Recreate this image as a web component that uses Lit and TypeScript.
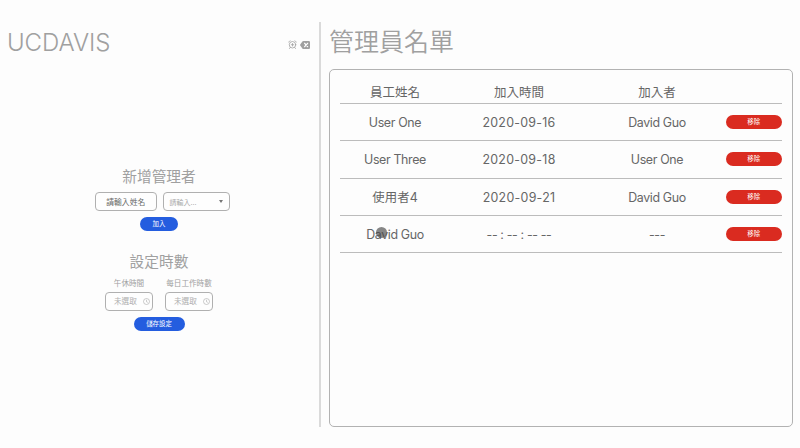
import { LitElement, html, css, svg } from "lit";
import { customElement } from "lit/decorators.js";
import { classMap } from "lit/directives/class-map.js";

interface Admin {
  name: string;
  joined: string;
  by: string;
}

const admins: Admin[] = [
  { name: "User One", joined: "2020-09-16", by: "David Guo" },
  { name: "User Three", joined: "2020-09-18", by: "User One" },
  { name: "使用者4", joined: "2020-09-21", by: "David Guo" },
  { name: "David Guo", joined: "-- : -- : -- --", by: "---" },
];

const alarmIcon = svg`<svg width="9" height="9" viewBox="0 0 18 18" fill="none" stroke="#a0a0a0" stroke-width="1.600" stroke-linecap="round">
  <circle cx="9" cy="9.500" r="6.500"/><path d="M9 7v5M6.500 9.500h5M1 4.500 4 1.500M17 4.500 14 1.500M4.500 15 3 17M13.500 15l1.500 2"/></svg>`;

const deleteIcon = svg`<svg width="10" height="8" viewBox="0 0 22 16" preserveAspectRatio="none"><path fill="#a0a0a0" d="M7.500 0H19.500Q22 0 22 2.500V13.500Q22 16 19.500 16H7.500Q6.200 16 5.200 14.800L.5 9.200Q-.3 8 .5 6.800L5.200 1.200Q6.200 0 7.500 0Z"/><path d="m10 4.500 7 7m0-7-7 7" stroke="#fff" stroke-width="2.300" stroke-linecap="round"/></svg>`;

const clockIcon = svg`<svg width="7" height="7" viewBox="0 0 14 14" fill="none" stroke="#b5b5b5" stroke-width="1.400"><circle cx="7" cy="7" r="6"/><path d="M7 3.500V7.500L9.500 8.800"/></svg>`;

@customElement("app-root")
export class AppRoot extends LitElement {
  static styles = css`
    :host {
      display: flex;
      box-sizing: border-box;
      width: 800px;
      height: 448px;
      padding: 22px 8px 21px 8px;
      background: #fdfdfd;
      color: #a0a0a0;
      font-family: Inter, "Noto Sans CJK TC", sans-serif;
      overflow: hidden;
      position: relative;
    }
    * {
      box-sizing: border-box;
    }
    svg {
      display: block;
      flex: none;
    }
    .side {
      width: 313px;
      flex: none;
      border-right: 2px solid #dadada;
      display: flex;
      flex-direction: column;
    }
    .brand {
      display: flex;
      justify-content: space-between;
      align-items: center;
      height: 40px;
      padding-right: 9px;
    }
    h1 {
      margin: 0;
      font-weight: 400;
      font-size: 24px;
      line-height: 40px;
      white-space: nowrap;
    }
    .brand h1 {
      font-weight: 350;
      letter-spacing: -0.05px;
      margin-left: -1px;
      padding-top: 1px;
    }
    .tools {
      display: flex;
      align-items: center;
      gap: 3px;
      padding-top: 5px;
    }
    .forms {
      width: 302px;
      padding-top: 104px;
      display: flex;
      flex-direction: column;
      align-items: center;
    }
    h2 {
      margin: 0;
      font-weight: 400;
      font-size: 14.700px;
      line-height: 22px;
      white-space: nowrap;
    }
    .row {
      display: flex;
      gap: 6px;
      margin-top: 4px;
      padding-left: 7px;
    }
    .field {
      height: 19px;
      border: 1px solid #b0b0b0;
      border-radius: 4px;
      display: flex;
      align-items: center;
      justify-content: space-between;
      background: #fefefe;
      white-space: nowrap;
    }
    .name {
      width: 61.500px;
      justify-content: center;
      font-size: 7.800px;
      color: #686868;
    }
    .pick {
      width: 67.500px;
      padding: 0 6px;
      font-size: 7px;
      color: #aaa;
    }
    .arrow {
      border: 2.500px solid transparent;
      border-top: 3px solid #757575;
      border-bottom: 0;
    }
    .button {
      height: 14px;
      border-radius: 7px;
      background: #245ddf;
      color: #fff;
      font-size: 6.400px;
      line-height: 14px;
      text-align: center;
      white-space: nowrap;
    }
    .join {
      width: 38px;
      margin-top: 6px;
    }
    .hours-title {
      margin-top: 20px;
    }
    .hours {
      display: flex;
      gap: 12px;
      margin-top: 5px;
    }
    .hour {
      width: 48px;
      display: flex;
      flex-direction: column;
      align-items: center;
      font-size: 7.600px;
      line-height: 12px;
      white-space: nowrap;
    }
    .hour .field {
      width: 48px;
      margin-top: 2px;
      padding: 0 2px 0 8px;
      font-size: 7.600px;
      color: #b0b0b0;
    }
    .save {
      width: 51px;
      margin-top: 6px;
    }
    .main {
      flex: 1;
      padding-left: 8px;
      display: flex;
      flex-direction: column;
    }
    .main h1 {
      font-size: 25px;
      font-weight: 350;
      padding-bottom: 7px;
    }
    .card {
      flex: 1;
      border: 1px solid #b2b2b2;
      border-radius: 5px;
      padding: 10px 10px;
      color: #666;
    }
    .line {
      display: grid;
      grid-template-columns: 110px 138px 138px 55.500px;
      align-items: center;
      justify-items: center;
      height: 37.300px;
      border-bottom: 1px solid #bcbcbc;
      font-size: 12.400px;
      letter-spacing: -0.35px;
      line-height: 18px;
      white-space: nowrap;
    }
    .line span {
      padding-top: 2px;
    }
    .line .cjk {
      letter-spacing: 0.1px;
    }
    .head {
      height: 24px;
      font-size: 12.500px;
      letter-spacing: 0;
    }
    .line .date {
      letter-spacing: 0.28px;
    }
    .line .date.empty {
      letter-spacing: -0.35px;
    }
    .remove {
      width: 55.500px;
      background: #da2b20;
      letter-spacing: 0;
    }
    .pointer {
      position: absolute;
      left: 376px;
      top: 227px;
      width: 11px;
      height: 11px;
      border-radius: 50%;
      background: rgba(70, 70, 70, 0.65);
    }
  `;

  render() {
    return html`
      <section class="side">
        <header class="brand">
          <h1>UCDAVIS</h1>
          <div class="tools">${alarmIcon}${deleteIcon}</div>
        </header>
        <div class="forms">
          <h2>新增管理者</h2>
          <div class="row">
            <div class="field name">請輸入姓名</div>
            <div class="field pick">請輸入...<i class="arrow"></i></div>
          </div>
          <div class="button join">加入</div>
          <h2 class="hours-title">設定時數</h2>
          <div class="hours">
            ${["午休時間", "每日工作時數"].map(
              (label) => html`<div class="hour">
                ${label}
                <div class="field">未選取${clockIcon}</div>
              </div>`
            )}
          </div>
          <div class="button save">儲存設定</div>
        </div>
      </section>
      <section class="main">
        <h1>管理員名單</h1>
        <div class="card">
          <div class="line head">
            <span>員工姓名</span><span>加入時間</span><span>加入者</span>
          </div>
          ${admins.map(
            (a) => html`<div class="line">
              <span class=${classMap({ cjk: /[^\x00-\x7f]/.test(a.name) })}>${a.name}</span>
              <span class=${classMap({ date: true, empty: a.joined.startsWith("-") })}>${a.joined}</span>
              <span>${a.by}</span>
              <div class="button remove">移除</div>
            </div>`
          )}
        </div>
      </section>
      <div class="pointer"></div>
    `;
  }
}
